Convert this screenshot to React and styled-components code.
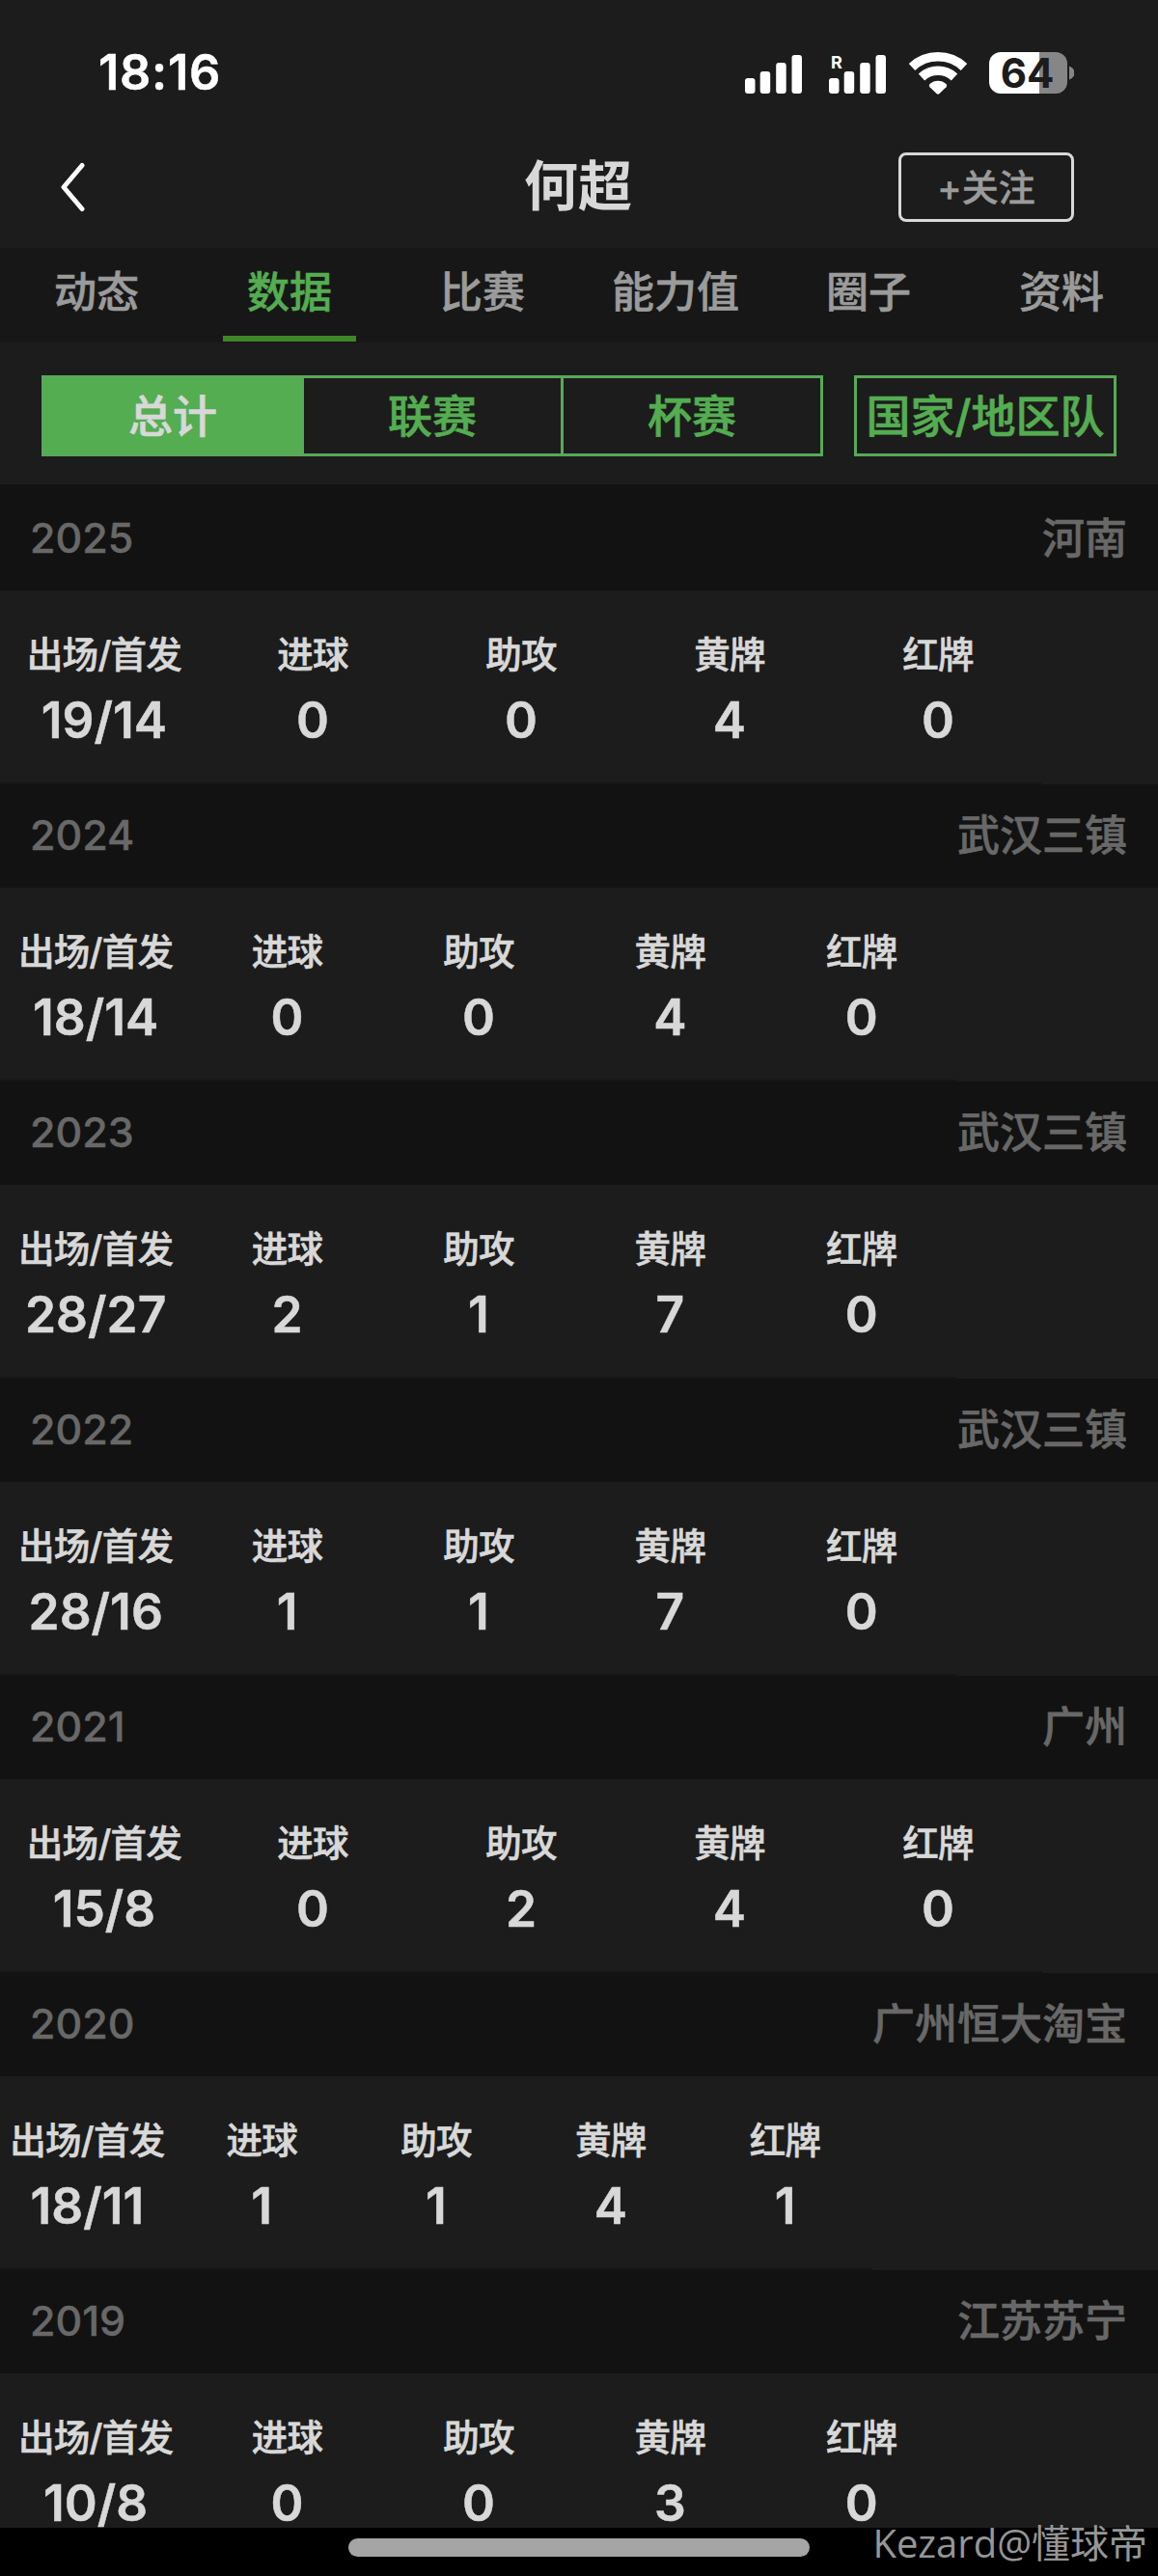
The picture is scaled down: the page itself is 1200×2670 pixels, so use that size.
import styled, { createGlobalStyle } from "styled-components";

const color = {
  page: "#1c1c1c",
  bar: "#171717",
  strip: "#121212",
  text: "#d8d8d8",
  tab: "#9b9b9b",
  muted: "#686868",
  green: "#54ad51",
  greenLine: "#58a958",
  greenDark: "#3f8528",
};

const GlobalStyle = createGlobalStyle`
  * {
    box-sizing: border-box;
  }
  body {
    margin: 0;
    background: ${color.page};
    font-family: Inter, "Noto Sans CJK SC", sans-serif;
    font-weight: 500;
    color: ${color.text};
  }
`;

// layout
const Screen = styled.div`
  position: relative;
  width: 1200px;
  height: 2670px;
  display: flex;
  flex-direction: column;
  overflow: hidden;
  background: ${color.page};
`;

const StatusBar = styled.div`
  height: 130px;
  flex: none;
  display: flex;
  justify-content: space-between;
  padding: 44px 87px 0 102px;
`;

const Clock = styled.span`
  height: 60px;
  line-height: 62px;
  font-size: 50.5px;
  font-weight: 600;
  letter-spacing: 0.7px;
  color: #fff;
  -webkit-text-stroke: 0.5px;
`;

const StatusIcons = styled.svg`
  width: 341px;
  height: 60px;
`;

const Navbar = styled.header`
  height: 127px;
  flex: none;
  display: grid;
  grid-template-columns: 1fr auto 1fr;
  align-items: start;
  padding: 28px 87px 0 61px;
`;

const BackIcon = styled.svg`
  width: 28px;
  height: 52px;
  margin-top: 10px;
`;

const PlayerName = styled.h1`
  margin: 0 0 0 24px;
  font-size: 56px;
  font-weight: 600;
  line-height: 70px;
`;

const FollowButton = styled.button`
  justify-self: end;
  width: 182px;
  height: 72px;
  padding: 0;
  border: 3px solid ${color.text};
  border-radius: 8px;
  background: transparent;
  color: ${color.tab};
  font: inherit;
  font-size: 38px;
  line-height: 64px;
  -webkit-text-stroke: 0.4px;
`;

const Tabs = styled.nav`
  height: 98px;
  flex: none;
  display: grid;
  grid-template-columns: repeat(6, 1fr);
  background: ${color.bar};
`;

const Tab = styled.a`
  display: flex;
  flex-direction: column;
  align-items: center;
  padding-top: 2px;
  font-size: 44px;
  line-height: 89px;
  color: ${({ $active }) => ($active ? color.green : color.tab)};
  -webkit-text-stroke: 0.6px;

  &::after {
    content: "";
    width: 138px;
    height: 6px;
    background: ${({ $active }) => ($active ? color.greenDark : "transparent")};
  }
`;

const Filters = styled.div`
  height: 147px;
  flex: none;
  display: flex;
  justify-content: space-between;
  padding: 34px 43px 0;
`;

const FilterGroup = styled.div`
  width: ${({ $width }) => $width}px;
  height: 84px;
  display: flex;
  border: 3px solid ${color.greenLine};
`;

const Filter = styled.button`
  flex: 1;
  padding: 0;
  border: 0;
  background: ${({ $active }) => ($active ? color.green : "transparent")};
  color: ${({ $active }) => ($active ? color.text : color.green)};
  font: inherit;
  font-size: 46px;
  line-height: 78px;
  white-space: nowrap;
  -webkit-text-stroke: 0.7px;

  & + & {
    border-left: 3px solid ${color.greenLine};
  }
`;

const Seasons = styled.main`
  height: 2118px;
  flex: none;
  padding-top: 3px;
  overflow: hidden;
  background: ${color.strip};
`;

const SeasonHeader = styled.div`
  height: 107px;
  display: flex;
  justify-content: space-between;
  padding: 0 32px 2px 31px;
  font-size: 44px;
  line-height: 105px;
  color: ${color.muted};
`;

const Year = styled.span`
  font-size: 43px;
  -webkit-text-stroke: 0.4px;
`;

const Team = styled.span`
  padding-top: 1px;
  -webkit-text-stroke: 0.6px;
`;

const SeasonBody = styled.div`
  height: 201px;
  background: ${color.page};
`;

const Stats = styled.div`
  width: ${({ $width }) => $width}px;
  height: 201px;
  display: grid;
  grid-template-columns: repeat(5, 1fr);
  border-bottom: 2px solid #151515;
`;

const Stat = styled.div`
  display: flex;
  flex-direction: column;
  align-items: center;
  padding-top: 39px;
  white-space: nowrap;
`;

const StatLabel = styled.span`
  font-size: 37.5px;
  line-height: 56px;
  letter-spacing: -0.7px;
  -webkit-text-stroke: 0.6px;
`;

const StatValue = styled.span`
  margin-top: 7px;
  font-size: 51.5px;
  font-weight: 600;
  font-feature-settings: "calt" 0;
  line-height: 64px;
  -webkit-text-stroke: 0.5px;
`;

const HomeBar = styled.footer`
  height: 50px;
  flex: none;
  display: flex;
  justify-content: center;
  padding-top: 11px;
  background: #000;
`;

const HomeIndicator = styled.div`
  width: 478px;
  height: 19px;
  border-radius: 10px;
  background: #a5a5a5;
`;

const Watermark = styled.span`
  position: absolute;
  right: 11px;
  bottom: 4px;
  font-family: "Open Sans", "Noto Sans CJK SC", sans-serif;
  font-size: 40px;
  font-weight: 400;
  line-height: 60px;
  color: #969696;
`;

const tabs = ["动态", "数据", "比赛", "能力值", "圈子", "资料"];
const filters = ["总计", "联赛", "杯赛"];
const labels = ["出场/首发", "进球", "助攻", "黄牌", "红牌"];

const seasons = [
  { year: 2025, team: "河南", stats: ["19/14", 0, 0, 4, 0] },
  { year: 2024, team: "武汉三镇", stats: ["18/14", 0, 0, 4, 0] },
  { year: 2023, team: "武汉三镇", stats: ["28/27", 2, 1, 7, 0] },
  { year: 2022, team: "武汉三镇", stats: ["28/16", 1, 1, 7, 0] },
  { year: 2021, team: "广州", stats: ["15/8", 0, 2, 4, 0] },
  { year: 2020, team: "广州恒大淘宝", stats: ["18/11", 1, 1, 4, 1] },
  { year: 2019, team: "江苏苏宁", stats: ["10/8", 0, 0, 3, 0] },
];

const statsWidth = (team) => 1168 - team.length * 44;

function SignalBars({ x }) {
  return (
    <g transform={`translate(${x} 0)`} fill="#fff">
      <rect x="0" y="37" width="10.5" height="16" rx="3" />
      <rect x="15.7" y="30" width="10.5" height="23" rx="3" />
      <rect x="32.2" y="21" width="10.5" height="32" rx="3" />
      <rect x="48.5" y="13" width="10.5" height="40" rx="3" />
    </g>
  );
}

function Status() {
  return (
    <StatusBar>
      <Clock>18:16</Clock>
      <StatusIcons viewBox="0 0 341 60">
        <SignalBars x={0} />
        <SignalBars x={87} />
        <text x="89" y="27" fontSize="18" fontWeight="700" fill="#fff">
          R
        </text>
        {/* wifi */}
        <g fill="none" stroke="#fff" strokeWidth="9.5">
          <path d="M173 25.5a39.5 39.5 0 0 1 54 0" />
          <path d="M183 36a25 25 0 0 1 34 0" />
        </g>
        <path
          d="M191.5 43a12.5 12.5 0 0 1 17 0q1.5 1.6 0 3.2l-7 6.8q-1.5 1.3-3 0l-7-6.8q-1.5-1.6 0-3.2z"
          fill="#fff"
        />
        {/* battery */}
        <path d="M305 10h17a12 12 0 0 1 12 12v19a12 12 0 0 1-12 12h-17z" fill="#868686" />
        <path d="M305 10h-40a12 12 0 0 0-12 12v19a12 12 0 0 0 12 12h40z" fill="#fff" />
        <path d="M336 24.5q5.5 2 5.5 7t-5.5 7z" fill="#868686" />
        <text
          x="292.5"
          y="47"
          fontSize="42"
          fontWeight="700"
          textAnchor="middle"
          fill={color.page}
        >
          64
        </text>
      </StatusIcons>
    </StatusBar>
  );
}

function Season({ year, team, stats }) {
  return (
    <section>
      <SeasonHeader>
        <Year>{year}</Year>
        <Team>{team}</Team>
      </SeasonHeader>
      <SeasonBody>
        <Stats $width={statsWidth(team)}>
          {labels.map((label, i) => (
            <Stat key={label}>
              <StatLabel>{label}</StatLabel>
              <StatValue>{stats[i]}</StatValue>
            </Stat>
          ))}
        </Stats>
      </SeasonBody>
    </section>
  );
}

function App() {
  return (
    <>
      <GlobalStyle />
      <Screen>
        <Status />
        <Navbar>
          <BackIcon viewBox="0 0 28 52">
            <path
              d="M24 3.5L5 26l19 22.5"
              fill="none"
              stroke="#fff"
              strokeWidth="5"
              strokeLinecap="round"
              strokeLinejoin="round"
            />
          </BackIcon>
          <PlayerName>何超</PlayerName>
          <FollowButton>+关注</FollowButton>
        </Navbar>
        <Tabs>
          {tabs.map((tab) => (
            <Tab key={tab} $active={tab === "数据"}>
              {tab}
            </Tab>
          ))}
        </Tabs>
        <Filters>
          <FilterGroup $width={810}>
            {filters.map((filter) => (
              <Filter key={filter} $active={filter === "总计"}>
                {filter}
              </Filter>
            ))}
          </FilterGroup>
          <FilterGroup $width={272}>
            <Filter>国家/地区队</Filter>
          </FilterGroup>
        </Filters>
        <Seasons>
          {seasons.map((season) => (
            <Season key={season.year} {...season} />
          ))}
        </Seasons>
        <HomeBar>
          <HomeIndicator />
        </HomeBar>
        <Watermark>Kezard@懂球帝</Watermark>
      </Screen>
    </>
  );
}

export default App;
